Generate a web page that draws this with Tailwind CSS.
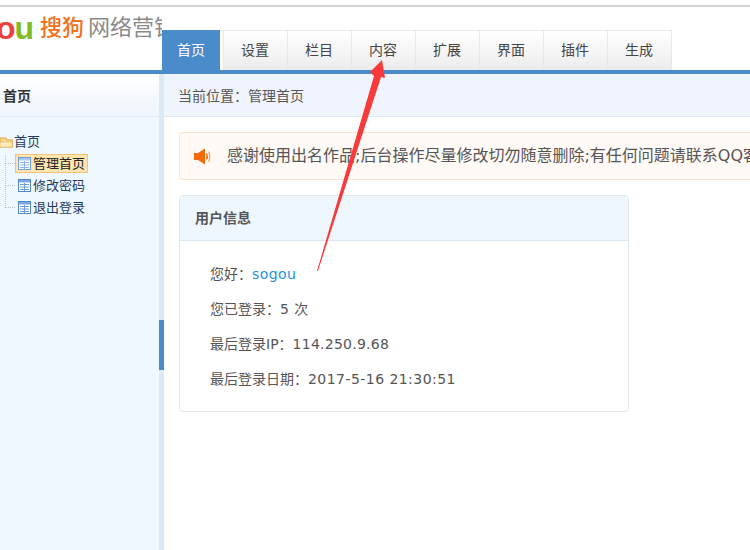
<!DOCTYPE html>
<html lang="zh-CN">
<head>
  <meta charset="UTF-8" />
  <title>管理首页</title>
  <script src="https://cdn.jsdelivr.net/npm/@tailwindcss/browser@4"></script>
</head>
<body class="relative w-[750px] h-[550px] overflow-hidden bg-white text-[14px] text-[#555] font-['DejaVu_Sans','Noto_Sans_CJK_SC',sans-serif]">
  <!-- header -->
  <header class="h-[74px] border-b-4 border-[#4a8bc9] flex pt-[5px] box-border">
    <div class="w-full border-t-2 border-[#d4d4d4] flex">
      <div class="w-[162px] h-[40px] shrink-0 overflow-hidden whitespace-nowrap flex items-center pt-[1px]">
        <span class="shrink-0 font-['Liberation_Sans',sans-serif] text-[32px] font-bold leading-none tracking-[-1px] -ml-[4px] text-[#ee4040]">o<span class="text-[#82bc24]">u</span></span>
        <span class="shrink-0 text-[22px] leading-none text-[#f2711c] font-medium ml-[7px]">搜狗</span>
        <span class="shrink-0 text-[22px] leading-none text-[#8a8a8a] ml-[4px]">网络营销</span>
      </div>
      <nav class="flex mt-[23px] h-[40px] text-[#444]">
        <a class="w-[58px] flex items-center justify-center bg-[#4a8bc9] text-white">首页</a>
        <a class="w-[64px] box-border pr-[1px] flex items-center justify-center border-l border-t border-[#e8e8e8] bg-gradient-to-b from-white to-[#ececec] ml-[3px]">设置</a>
        <a class="w-[64px] box-border pr-[1px] flex items-center justify-center border-l border-t border-[#e8e8e8] bg-gradient-to-b from-white to-[#ececec]">栏目</a>
        <a class="w-[64px] box-border pr-[1px] flex items-center justify-center border-l border-t border-[#e8e8e8] bg-gradient-to-b from-white to-[#ececec]">内容</a>
        <a class="w-[64px] box-border pr-[1px] flex items-center justify-center border-l border-t border-[#e8e8e8] bg-gradient-to-b from-white to-[#ececec]">扩展</a>
        <a class="w-[64px] box-border pr-[1px] flex items-center justify-center border-l border-t border-[#e8e8e8] bg-gradient-to-b from-white to-[#ececec]">界面</a>
        <a class="w-[64px] box-border pr-[1px] flex items-center justify-center border-l border-t border-[#e8e8e8] bg-gradient-to-b from-white to-[#ececec]">插件</a>
        <a class="w-[65px] box-border pr-[1px] flex items-center justify-center border-x border-t border-[#e8e8e8] bg-gradient-to-b from-white to-[#ececec]">生成</a>
      </nav>
    </div>
  </header>

  <div class="flex h-[476px]">
    <!-- sidebar -->
    <aside class="w-[159px] shrink-0 bg-[#f0f8ff]">
      <div class="h-[43px] box-border pt-[2px] border-b border-[#dde8f2] bg-gradient-to-b from-white to-[#eef5fc] flex items-center pl-[3px] font-bold text-[#333]">首页</div>
      <div class="relative pt-[16px] text-[13px] text-[#1c3a5e]">
        <div class="h-[18px] flex items-center">
          <svg class="w-[13px] h-[12px]" viewBox="0 0 13 12">
            <path d="M0 2h6l1 2h6v7H0z" fill="#fbdc8e" stroke="#dba24f"/>
            <path d="M0 6h12v5H0z" fill="#ffeebb" stroke="#e3ac5c" stroke-width=".6"/>
          </svg>
          <span class="ml-[1px]">首页</span>
        </div>
        <!-- tree connectors -->
        <div class="absolute left-[5px] top-[38px] h-[53px] border-l border-dotted border-[#b9c4cf]"></div>
        <div class="absolute left-[6px] top-[46px] w-[9px] border-t border-dotted border-[#b9c4cf]"></div>
        <div class="absolute left-[6px] top-[68px] w-[9px] border-t border-dotted border-[#b9c4cf]"></div>
        <div class="absolute left-[6px] top-[90px] w-[9px] border-t border-dotted border-[#b9c4cf]"></div>
        <div class="ml-[15px] mt-[3px] flex flex-col gap-[3px]">
          <div class="h-[19px] w-[73px] box-border border border-[#f2c27a] bg-[#ffe6b0] flex items-center pl-[2px] gap-[2px] text-[#222]">
            <svg class="w-[13px] h-[13px] shrink-0" viewBox="0 0 13 13"><rect x=".5" y=".5" width="12" height="12" fill="#fff" stroke="#6f9fdc"/><rect x="1" y="1" width="11" height="2.5" fill="#a9c8f0"/><path d="M2 5.500h9M2 8h9M2 10.500h9M6.500 4v8" stroke="#8db2e4"/></svg>
            <span>管理首页</span>
          </div>
          <div class="h-[19px] flex items-center pl-[3px] gap-[2px]">
            <svg class="w-[13px] h-[13px] shrink-0" viewBox="0 0 13 13"><rect x=".5" y=".5" width="12" height="12" fill="#fff" stroke="#4f86cc"/><rect x="1" y="1" width="11" height="2.5" fill="#7ea9e0"/><path d="M2 5.500h9M2 8h9M2 10.500h9M6.500 4v8" stroke="#6f9ad6"/></svg>
            <span>修改密码</span>
          </div>
          <div class="h-[19px] flex items-center pl-[3px] gap-[2px]">
            <svg class="w-[13px] h-[13px] shrink-0" viewBox="0 0 13 13"><rect x=".5" y=".5" width="12" height="12" fill="#fff" stroke="#4f86cc"/><rect x="1" y="1" width="11" height="2.5" fill="#7ea9e0"/><path d="M2 5.500h9M2 8h9M2 10.500h9M6.500 4v8" stroke="#6f9ad6"/></svg>
            <span>退出登录</span>
          </div>
        </div>
      </div>
    </aside>

    <!-- splitter -->
    <div class="w-[5px] shrink-0 bg-[#dce8f3] pt-[246px]">
      <div class="h-[50px] bg-[#4a8bc9]"></div>
    </div>

    <!-- main -->
    <main class="flex-1 min-w-0 overflow-hidden">
      <div class="h-[43px] box-border pt-[2px] border-b border-[#dde8f2] bg-[#f0f5fd] flex items-center pl-[14px] text-[#555]">当前位置：管理首页</div>
      <div class="ml-[15px] mt-[15px] h-[48px] w-[600px] box-border border border-r-0 border-[#fbe4d2] rounded-l-[4px] bg-[#fffaf6] flex items-center overflow-hidden whitespace-nowrap">
        <svg class="ml-[14px] w-[17px] h-[17px] shrink-0" viewBox="0 0 17 17">
          <path d="M0 5h4L11 .5v16L4 12H0z" fill="#f46a06"/>
          <path d="M12.500 5.500q1.500 3 0 6" fill="none" stroke="#f46a06" stroke-width="1.500"/>
          <path d="M14.500 3.500q2.500 5 0 10" fill="none" stroke="#f9a25e" stroke-width="1.200"/>
        </svg>
        <span class="ml-[16px] text-[16px] text-[#555]">感谢使用出名作品;后台操作尽量修改切勿随意删除;有任何问题请联系QQ客服</span>
      </div>
      <section class="ml-[15px] mt-[15px] w-[450px] h-[217px] box-border border border-[#dfe8f0] rounded-[4px] overflow-hidden">
        <h2 class="h-[45px] box-border border-b border-[#dbe7f2] bg-[#eff7fe] flex items-center pl-[15px] font-bold text-[#555]">用户信息</h2>
        <div class="pl-[30px] pt-[23px] flex flex-col gap-[14px] text-[14px] leading-[21px]">
          <p>您好：<span class="text-[#1e90e6] tracking-[0.4px]">sogou</span></p>
          <p>您已登录：<span class="tracking-[0.4px]">5 </span>次</p>
          <p>最后登录IP：<span class="tracking-[0.25px]">114.250.9.68</span></p>
          <p>最后登录日期：<span class="tracking-[0.45px]">2017-5-16 21:30:51</span></p>
        </div>
      </section>
    </main>
  </div>

  <!-- annotation arrow drawn over the page -->
  <svg class="absolute left-0 top-0 pointer-events-none" width="750" height="550" viewBox="0 0 750 550">
    <path d="M317 271 L374 76 L370 72 L382 60 L385 78 L381 77 L318 271 Z" fill="#f93a3a"/>
  </svg>
</body>
</html>
